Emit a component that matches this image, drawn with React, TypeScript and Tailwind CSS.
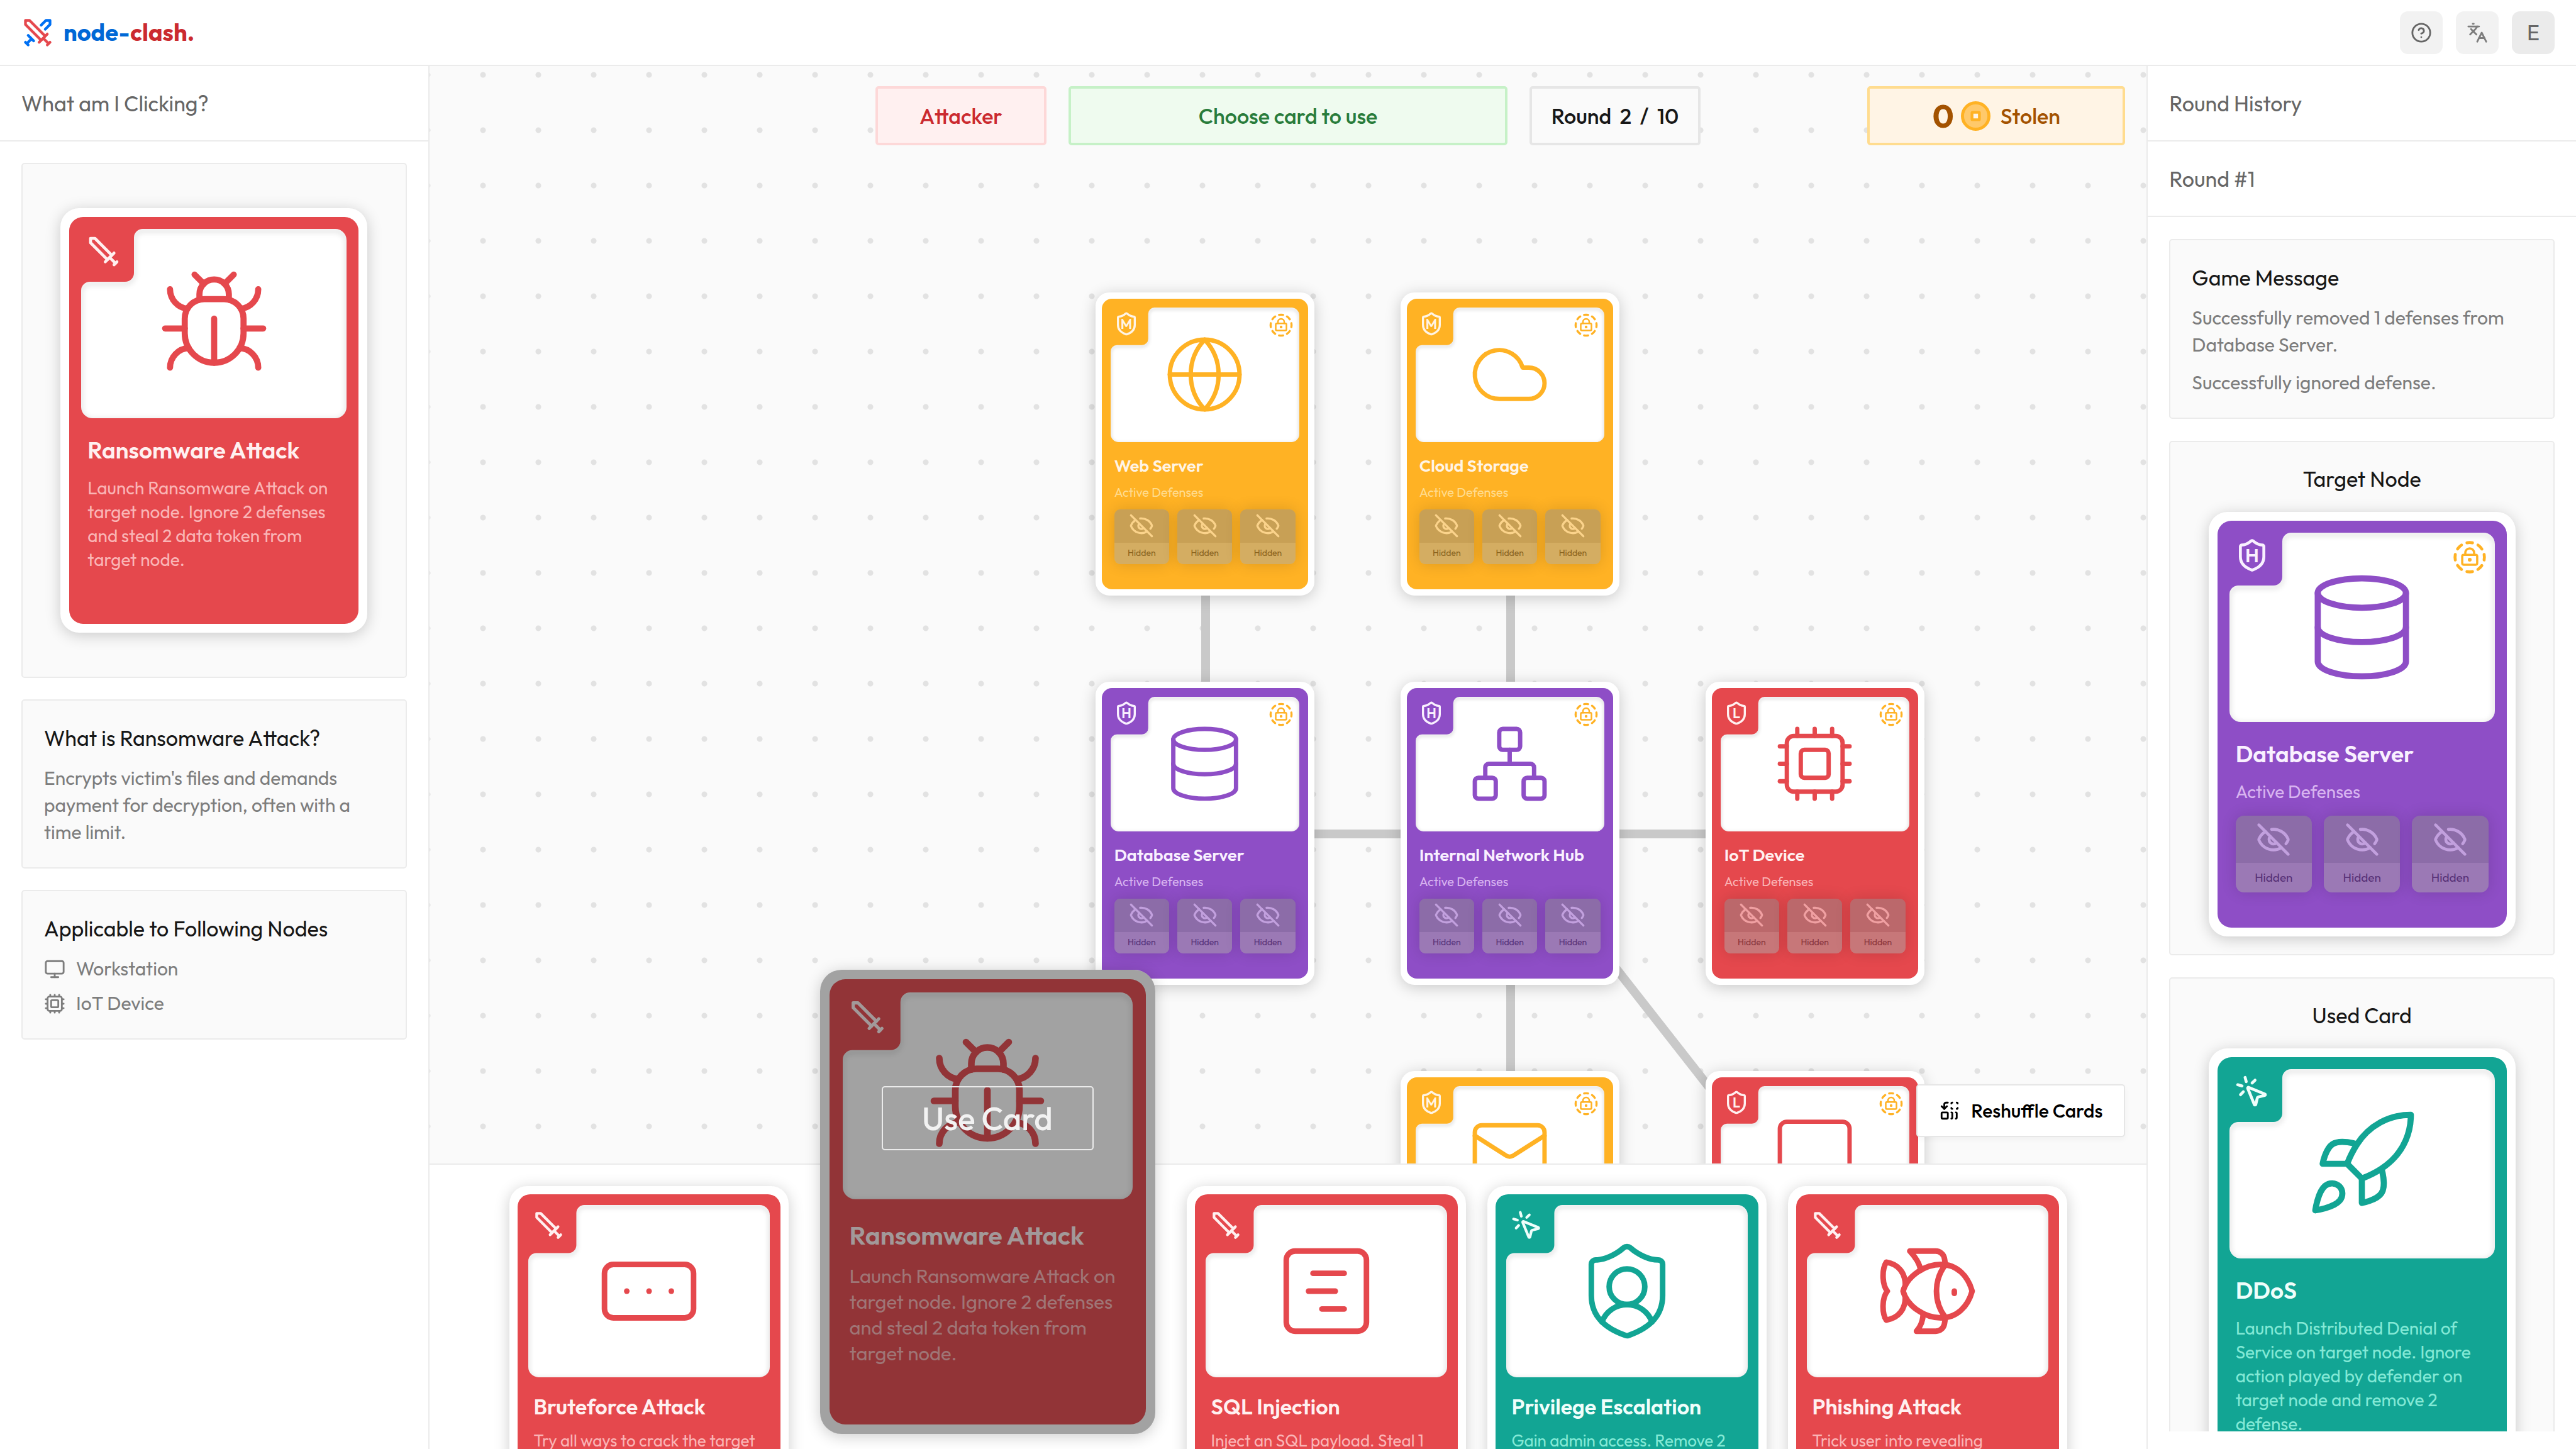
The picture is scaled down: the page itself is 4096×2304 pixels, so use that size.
import * as React from 'react';
import {
  Bug,
  CircleHelp,
  Cloud,
  Cpu,
  Database,
  EyeOff,
  Fish,
  Globe,
  Languages,
  Mail,
  Monitor,
  MousePointerClick,
  Network,
  RectangleEllipsis,
  ReplaceAll,
  ShieldUser,
  SquareChartGantt,
} from 'lucide-react';

type IconProps = { className?: string; strokeWidth?: number };
type IconType = React.ComponentType<IconProps>;

const Rocket: IconType = ({ className, strokeWidth = 2 }) => (
  <svg viewBox="0 0 24 24" className={className} fill="none" stroke="currentColor" strokeWidth={strokeWidth} strokeLinecap="round" strokeLinejoin="round" aria-hidden="true">
    <path d="M4.5 16.5c-1.5 1.26-2 5-2 5s3.74-.5 5-2c.71-.84.7-2.13-.09-2.91a2.18 2.18 0 0 0-2.91-.09z" />
    <path d="m12 15-3-3a22 22 0 0 1 2-3.95A12.88 12.88 0 0 1 22 2c0 2.72-.78 7.5-6 11a22.35 22.35 0 0 1-4 2z" />
    <path d="M9 12H4s.55-3.03 2-4c1.62-1.08 5 0 5 0" />
    <path d="M12 15v5s3.03-.55 4-2c1.08-1.62 0-5 0-5" />
  </svg>
);

const Sword: IconType = ({ className, strokeWidth = 2 }) => (
  <svg viewBox="0 0 24 24" className={className} fill="none" stroke="currentColor" strokeWidth={strokeWidth} strokeLinecap="round" strokeLinejoin="round" aria-hidden="true">
    <path d="M14.5 17.5 3 6V3h3l11.5 11.5" />
    <path d="m13 19 6-6" />
    <path d="m16 16 4 4" />
    <path d="m19 21 2-2" />
  </svg>
);

const Logo = () => (
  <svg viewBox="0 0 24 24" className="size-[52px]" fill="none" strokeWidth="2" strokeLinecap="round" strokeLinejoin="round" aria-hidden="true">
    <g stroke="#0070f3">
      <path d="M14.5 6.5 18 3h3v3l-3.5 3.5" />
      <path d="m5 14 4 4M7 17l-3 3M3 19l2 2" />
    </g>
    <g stroke="#e5484d">
      <path d="M14.5 17.5 3 6V3h3l11.5 11.5" />
      <path d="m13 19 6-6M16 16l4 4M19 21l2-2" />
    </g>
  </svg>
);

const LevelShield = ({ level, className }: { level: string; className: string }) => (
  <svg viewBox="0 0 24 24" className={className} aria-label={`Security level ${level}`}>
    <path
      d="M20 13c0 5-3.5 7.5-7.66 8.95a1 1 0 0 1-.67-.01C7.5 20.5 4 18 4 13V6a1 1 0 0 1 1-1c2 0 4.5-1.2 6.24-2.72a1.17 1.17 0 0 1 1.52 0C14.51 3.81 17 5 19 5a1 1 0 0 1 1 1z"
      fill="none"
      stroke="currentColor"
      strokeWidth="2"
      strokeLinecap="round"
      strokeLinejoin="round"
    />
    <text x="12" y="16.5" textAnchor="middle" fill="currentColor" fontSize="13" fontWeight="600" fontFamily="Outfit, Inter, sans-serif">
      {level}
    </text>
  </svg>
);

const LockToken = ({ className }: { className: string }) => (
  <svg viewBox="0 0 24 24" className={className} fill="none" stroke="currentColor" strokeLinecap="round" strokeLinejoin="round" aria-hidden="true">
    <g strokeWidth="2">
      <path d="M10.1 2.182a10 10 0 0 1 3.8 0" />
      <path d="M13.9 21.818a10 10 0 0 1-3.8 0" />
      <path d="M17.609 3.721a10 10 0 0 1 2.69 2.7" />
      <path d="M2.182 13.9a10 10 0 0 1 0-3.8" />
      <path d="M20.279 17.609a10 10 0 0 1-2.7 2.69" />
      <path d="M21.818 10.1a10 10 0 0 1 0 3.8" />
      <path d="M3.721 6.391a10 10 0 0 1 2.7-2.69" />
      <path d="M6.391 20.279a10 10 0 0 1-2.69-2.7" />
    </g>
    <g strokeWidth="1.5">
      <rect x="6.9" y="10.4" width="10.2" height="6.7" rx="1" />
      <path d="M9 10.4V9a3 3 0 0 1 6 0v1.4" />
    </g>
    <circle cx="12" cy="13.75" r="1.3" fill="currentColor" stroke="none" />
  </svg>
);

const Coin = () => (
  <svg viewBox="0 0 48 48" className="size-[47px]" aria-hidden="true">
    <circle cx="24" cy="24" r="21.5" fill="#ffc96b" stroke="#ffb224" strokeWidth="5" />
    <rect x="18" y="18" width="12" height="12" rx="1" fill="#fff4e5" stroke="#ffb224" strokeWidth="4.5" />
  </svg>
);

const PANEL =
  'M98 0H404a18 18 0 0 1 18 18V283a18 18 0 0 1-18 18H18a18 18 0 0 1-18-18V98a14 14 0 0 1 14-14H70a14 14 0 0 0 14-14V14a14 14 0 0 1 14-14Z';

/** White picture area with a notch cut out of its top left corner. */
const PanelShape = () => {
  const id = React.useId();
  return (
    <svg viewBox="0 0 422 301" className="absolute inset-0 size-full" aria-hidden="true">
      <clipPath id={id}>
        <path d={PANEL} />
      </clipPath>
      <path d={PANEL} fill="#fff" />
      <g clipPath={`url(#${id})`}>
        <path d={PANEL} fill="none" stroke="#000" strokeOpacity="0.16" strokeWidth="4" transform="translate(0 3)" className="blur-[4px]" />
      </g>
    </svg>
  );
};

const themes = {
  red: { bg: 'bg-[#e5484d]', fg: 'text-[#e5484d]', title: 'text-[#fff0f0]', desc: 'text-[#fab5b6]', top: 'bg-[#bb686b]', bottom: 'bg-[#c77779]', eye: 'text-[#f0a0a2]', label: 'text-[#89343a]' },
  amber: { bg: 'bg-[#ffb224]', fg: 'text-[#ffb224]', title: 'text-[#fff4e5]', desc: 'text-[#ffdc8f]', top: 'bg-[#c8a055]', bottom: 'bg-[#d4ad62]', eye: 'text-[#fbd38b]', label: 'text-[#8c6520]' },
  purple: { bg: 'bg-[#8e4ec6]', fg: 'text-[#8e4ec6]', title: 'text-[#f9f0ff]', desc: 'text-[#d8b4f0]', top: 'bg-[#8c6ca8]', bottom: 'bg-[#9b79b5]', eye: 'text-[#c2a0de]', label: 'text-[#573177]' },
  teal: { bg: 'bg-[#12a594]', fg: 'text-[#12a594]', title: 'text-[#effefb]', desc: 'text-[#83e9d6]', top: 'bg-[#4d978f]', bottom: 'bg-[#5da69e]', eye: 'text-[#8adbd0]', label: 'text-[#13665d]' },
};

const sizes = {
  lg: {
    frame: 'w-[488px] h-[675px] border-[14px] rounded-[30px]',
    inner: 'rounded-[22px] p-[19px]',
    icon: 'size-[187px]',
    tag: 'left-[8px] top-[8px] size-[56px]',
    lock: 'right-[12px] top-[11px] size-[56px]',
    body: 'px-[10px]',
    title: 'mt-[28px] text-[37px] leading-[46px]',
    desc: 'mt-[18px] text-[28px] leading-[38px]',
    tokens: 'mt-[19px] gap-[19px]',
    token: 'rounded-[13px]',
    tokenTop: 'h-[75px]',
    tokenBottom: 'h-[47px] text-[19px]',
    eye: 'size-[56px]',
  },
  hover: {
    frame: 'w-[533px] h-[738px] border-[15px] rounded-[34px]',
    inner: 'rounded-[25px] p-[21px]',
    icon: 'size-[204px]',
    tag: 'left-[9px] top-[9px] size-[61px]',
    lock: 'right-[13px] top-[12px] size-[61px]',
    body: 'px-[11px]',
    title: 'mt-[32px] text-[41px] leading-[50px]',
    desc: 'mt-[19px] text-[31px] leading-[41px]',
    tokens: 'mt-[21px] gap-[21px]',
    token: 'rounded-[14px]',
    tokenTop: 'h-[82px]',
    tokenBottom: 'h-[51px] text-[21px]',
    eye: 'size-[61px]',
  },
  hand: {
    frame: 'w-[444px] h-[614px] border-[13px] rounded-[28px]',
    inner: 'rounded-[20px] p-[17px]',
    icon: 'size-[170px]',
    tag: 'left-[7px] top-[7px] size-[51px]',
    lock: 'right-[11px] top-[10px] size-[51px]',
    body: 'px-[9px]',
    title: 'mt-[26px] text-[34px] leading-[42px]',
    desc: 'mt-[16px] text-[26px] leading-[34px]',
    tokens: 'mt-[17px] gap-[17px]',
    token: 'rounded-[12px]',
    tokenTop: 'h-[68px]',
    tokenBottom: 'h-[43px] text-[17px]',
    eye: 'size-[51px]',
  },
  node: {
    frame: 'w-[348px] h-[482px] border-[10px] rounded-[22px]',
    inner: 'rounded-[16px] p-[14px]',
    icon: 'size-[133px]',
    tag: 'left-[5px] top-[6px] size-[40px]',
    lock: 'right-[9px] top-[8px] size-[40px]',
    body: 'px-[6px]',
    title: 'mt-[21px] text-[27px] leading-[33px]',
    desc: 'mt-[12px] text-[20px] leading-[27px]',
    tokens: 'mt-[14px] gap-[13px]',
    token: 'rounded-[9px]',
    tokenTop: 'h-[53px]',
    tokenBottom: 'h-[34px] text-[14px]',
    eye: 'size-[40px]',
  },
};

type CardProps = {
  size: keyof typeof sizes;
  theme: keyof typeof themes;
  icon: IconType;
  title?: string;
  text?: string;
  level?: string;
  tag?: IconType;
};

const Card = ({ size, theme, icon: Icon, title, text, level, tag: Tag }: CardProps) => {
  const s = sizes[size];
  const t = themes[theme];
  return (
    <article className={`${s.frame} shrink-0 border-white bg-white shadow-[0_4px_24px_rgba(0,0,0,0.2)]`}>
      <div className={`${s.inner} ${t.bg} h-full`}>
        <div className={`relative flex aspect-[422/301] items-center justify-center ${t.fg}`}>
          <PanelShape />
          <Icon className={`relative ${s.icon}`} strokeWidth={1.25} />
          {level && <LevelShield level={level} className={`absolute ${s.tag} ${t.title}`} />}
          {Tag && <Tag className={`absolute ${s.tag} ${t.title}`} strokeWidth={2} />}
          {level && <LockToken className={`absolute ${s.lock} text-[#ffb224]`} />}
        </div>
        {title && (
          <div className={s.body}>
            <h3 className={`${s.title} ${t.title} font-semibold whitespace-nowrap`}>{title}</h3>
            <p className={`${s.desc} ${t.desc}`}>{text ?? 'Active Defenses'}</p>
            {level && (
              <ul className={`flex ${s.tokens}`}>
                {[0, 1, 2].map((n) => (
                  <li key={n} className={`${s.token} flex-1 overflow-hidden shadow-[0_0_24px_rgba(0,0,0,0.14)]`}>
                    <div className={`flex items-center justify-center ${s.tokenTop} ${t.top} ${t.eye}`}>
                      <EyeOff className={s.eye} strokeWidth={2} />
                    </div>
                    <div className={`flex items-center justify-center ${s.tokenBottom} ${t.bottom} ${t.label}`}>Hidden</div>
                  </li>
                ))}
              </ul>
            )}
          </div>
        )}
      </div>
    </article>
  );
};

const Box = ({ className = '', children }: { className?: string; children: React.ReactNode }) => (
  <section className={`shrink-0 rounded-[5px] border-2 border-[#ebebeb] bg-[#fafafa] ${className}`}>{children}</section>
);

const PanelTitle = ({ children }: { children: React.ReactNode }) => (
  <h2 className="flex h-[120px] shrink-0 items-center border-b-2 border-[#ebebeb] px-[34px] text-[34px] leading-[51px] text-[#666]">{children}</h2>
);

const nodes: (CardProps & { x: number; y: number })[] = [
  { x: 1059, y: 360, size: 'node', theme: 'amber', icon: Globe, title: 'Web Server', level: 'M' },
  { x: 1544, y: 360, size: 'node', theme: 'amber', icon: Cloud, title: 'Cloud Storage', level: 'M' },
  { x: 1059, y: 979, size: 'node', theme: 'purple', icon: Database, title: 'Database Server', level: 'H' },
  { x: 1544, y: 979, size: 'node', theme: 'purple', icon: Network, title: 'Internal Network Hub', level: 'H' },
  { x: 2029, y: 979, size: 'node', theme: 'red', icon: Cpu, title: 'IoT Device', level: 'L' },
  { x: 1544, y: 1598, size: 'node', theme: 'amber', icon: Mail, level: 'M' },
  { x: 2029, y: 1598, size: 'node', theme: 'red', icon: Monitor, level: 'L' },
];

const ransomText = 'Launch Ransomware Attack on target node. Ignore 2 defenses and steal 2 data token from target node.';

const Pill = ({ className, children }: { className: string; children: React.ReactNode }) => (
  <div className={`flex h-[94px] items-center justify-center rounded-[5px] border-4 text-[34px] font-medium ${className}`}>{children}</div>
);

const Header = () => (
  <header className="flex h-[105px] shrink-0 items-center justify-between border-b-2 border-[#ebebeb] bg-white px-[34px]">
    <a href="#" className="flex items-center gap-[15px] text-[38px] font-bold">
      <Logo />
      <span className="text-[#0068d6]">
        node-<span className="text-[#cb2a2f]">clash.</span>
      </span>
    </a>
    <div className="flex gap-[21px] text-[#666]">
      <button type="button" aria-label="Help" className="flex size-[68px] items-center justify-center rounded-[13px] bg-[#f2f2f2]">
        <CircleHelp className="size-[34px]" />
      </button>
      <button type="button" aria-label="Language" className="flex size-[68px] items-center justify-center rounded-[13px] bg-[#f2f2f2] text-[#7d7d7d]">
        <Languages className="size-[34px]" />
      </button>
      <button type="button" className="flex size-[68px] items-center justify-center rounded-[13px] bg-[#ebebeb] text-[34px]">
        E
      </button>
    </div>
  </header>
);

const InfoPanel = () => (
  <aside className="flex w-1/6 shrink-0 flex-col border-r-2 border-[#ebebeb] bg-white">
    <PanelTitle>What am I Clicking?</PanelTitle>
    <div className="flex flex-col gap-[34px] p-[34px]">
      <Box className="flex justify-center py-[70px]">
        <Card size="lg" theme="red" icon={Bug} tag={Sword} title="Ransomware Attack" text={ransomText} />
      </Box>
      <Box className="p-[34px]">
        <h3 className="text-[34px] leading-[51px] text-[#171717]">What is Ransomware Attack?</h3>
        <p className="mt-[17px] text-[30px] leading-[43px] text-[#7d7d7d]">
          Encrypts victim's files and demands payment for decryption, often with a time limit.
        </p>
      </Box>
      <Box className="p-[34px]">
        <h3 className="text-[34px] leading-[51px] text-[#171717]">Applicable to Following Nodes</h3>
        <ul className="mt-[17px] flex flex-col gap-[12px] text-[30px] leading-[43px] text-[#7d7d7d]">
          <li className="flex items-center gap-[17px]">
            <Monitor className="size-[34px]" />
            Workstation
          </li>
          <li className="flex items-center gap-[17px]">
            <Cpu className="size-[34px]" />
            IoT Device
          </li>
        </ul>
      </Box>
    </div>
  </aside>
);

const HistoryPanel = () => (
  <aside className="flex w-1/6 shrink-0 flex-col border-l-2 border-[#ebebeb] bg-white pb-[28px]">
    <PanelTitle>Round History</PanelTitle>
    <PanelTitle>Round #1</PanelTitle>
    <div className="flex min-h-0 flex-1 flex-col gap-[35px] overflow-hidden px-[34px] pt-[35px]">
      <Box className="p-[34px]">
        <h3 className="text-[34px] leading-[51px] text-[#171717]">Game Message</h3>
        <div className="mt-[17px] flex flex-col gap-[17px] text-[30px] leading-[43px] text-[#7d7d7d]">
          <p>Successfully removed 1 defenses from Database Server.</p>
          <p>Successfully ignored defense.</p>
        </div>
      </Box>
      <Box className="flex flex-col items-center gap-[27px] pt-[33px] pb-[28px]">
        <h3 className="text-[34px] leading-[51px] text-[#171717]">Target Node</h3>
        <Card size="lg" theme="purple" icon={Database} title="Database Server" level="H" />
      </Box>
      <Box className="flex flex-col items-center gap-[27px] pt-[33px] pb-[28px]">
        <h3 className="text-[34px] leading-[51px] text-[#171717]">Used Card</h3>
        <Card
          size="lg"
          theme="teal"
          icon={Rocket}
          tag={MousePointerClick}
          title="DDoS"
          text="Launch Distributed Denial of Service on target node. Ignore action played by defender on target node and remove 2 defense."
        />
      </Box>
    </div>
  </aside>
);

const Board = () => (
  <section className="relative min-h-0 flex-1 overflow-hidden bg-[#fafafa] bg-[radial-gradient(circle,#e2e2e2_4px,transparent_5px)] bg-[length:88px_88px] bg-[position:41px_-30px]">
    <svg className="absolute inset-0 size-full" stroke="#c9c9c9" strokeWidth="14" aria-hidden="true">
      <line x1="1234" y1="601" x2="1234" y2="1221" />
      <line x1="1719" y1="601" x2="1719" y2="1839" />
      <line x1="1234" y1="1221" x2="2204" y2="1221" />
      <line x1="1719" y1="1221" x2="2204" y2="1840" />
    </svg>
    {nodes.map(({ x, y, ...card }) => (
      <div key={`${x}-${y}`} className="absolute" style={{ left: x, top: y }}>
        <Card {...card} />
      </div>
    ))}
    <div className="absolute inset-x-0 top-[32px] flex justify-center gap-[35px]">
      <Pill className="w-[272px] border-[#fdd8d8] bg-[#fff0f0] text-[#cb2a2f]">Attacker</Pill>
      <Pill className="w-[698px] border-[#c6f1c7] bg-[#effbef] text-[#297c3b]">Choose card to use</Pill>
      <Pill className="w-[272px] border-[#e6e6e6] bg-[#fafafa] whitespace-pre text-[#171717]">Round  2  /  10</Pill>
    </div>
    <div className="absolute top-[32px] right-[34px]">
      <Pill className="w-[410px] border-[#ffdc8f] bg-[#fff4e5] text-[#a35200]">
        <span className="mr-[11px] text-[51px] font-bold">0</span>
        <Coin />
        <span className="ml-[16px]">Stolen</span>
      </Pill>
    </div>
    <button
      type="button"
      className="absolute right-[34px] bottom-[42px] flex h-[84px] items-center gap-[17px] rounded-[5px] border-2 border-[#e6e6e6] bg-white px-[34px] text-[30px] font-medium text-black shadow-[0_4px_10px_rgba(0,0,0,0.04)]"
    >
      <ReplaceAll className="size-[34px]" />
      Reshuffle Cards
    </button>
  </section>
);

const Hand = () => (
  <section className="flex h-[454px] shrink-0 items-start justify-center gap-[34px] border-t-2 border-[#ebebeb] bg-white pt-[34px]">
    <Card size="hand" theme="red" icon={RectangleEllipsis} tag={Sword} title="Bruteforce Attack" text="Try all ways to crack the target" />
    <div className="relative z-10 mx-[16px] -mt-[344px] shrink-0">
      <Card size="hover" theme="red" icon={Bug} tag={Sword} title="Ransomware Attack" text={ransomText} />
      <div className="absolute inset-0 flex items-start justify-center rounded-[34px] bg-[#171717]/40 pt-[185px]">
        <button type="button" className="flex h-[102px] w-[337px] items-center justify-center rounded-[5px] border-2 border-[#ebebeb] text-[51px] font-medium text-[#f2f2f2]">
          Use Card
        </button>
      </div>
    </div>
    <Card size="hand" theme="red" icon={SquareChartGantt} tag={Sword} title="SQL Injection" text="Inject an SQL payload. Steal 1" />
    <Card size="hand" theme="teal" icon={ShieldUser} tag={MousePointerClick} title="Privilege Escalation" text="Gain admin access. Remove 2" />
    <Card size="hand" theme="red" icon={Fish} tag={Sword} title="Phishing Attack" text="Trick user into revealing" />
  </section>
);

export default function App() {
  return (
    <div className="flex h-screen flex-col overflow-hidden bg-white font-[Outfit,Lato,sans-serif]">
      <Header />
      <div className="flex min-h-0 flex-1">
        <InfoPanel />
        <main className="flex min-w-0 flex-1 flex-col">
          <Board />
          <Hand />
        </main>
        <HistoryPanel />
      </div>
    </div>
  );
}
